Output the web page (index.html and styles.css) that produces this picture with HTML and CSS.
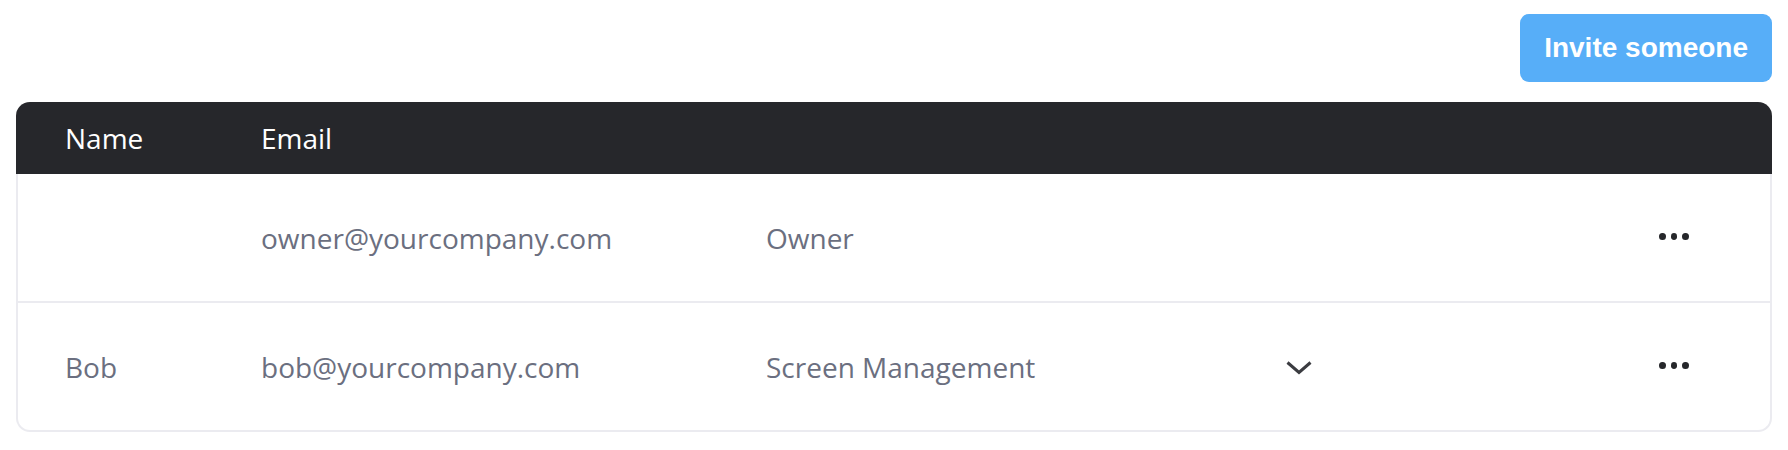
FILE: index.html
```html
<!DOCTYPE html>
<html lang="en">
<head>
  <meta charset="UTF-8" />
  <meta name="viewport" content="width=device-width, initial-scale=1.0" />
  <title>Team members</title>
  <link rel="stylesheet" href="styles.css">
</head>
<body>
  <div class="page">
    <div class="toolbar">
      <button class="invite">Invite someone</button>
    </div>

    <div class="members">
      <div class="head row">
        <div>Name</div>
        <div>Email</div>
        <div></div>
        <div></div>
        <div></div>
      </div>
      <div class="body">
        <div class="row">
          <div></div>
          <div>owner@yourcompany.com</div>
          <div>Owner</div>
          <div></div>
          <div class="more"><span class="dot"></span><span class="dot"></span><span class="dot"></span></div>
        </div>
        <div class="row">
          <div>Bob</div>
          <div>bob@yourcompany.com</div>
          <div>Screen Management</div>
          <div class="caret">
            <svg width="26" height="14" viewBox="0 0 26 14"><path d="M1.5 1.5 L13 11.5 L24.5 1.5" fill="none" stroke="#3b3c41" stroke-width="3"/></svg>
          </div>
          <div class="more"><span class="dot"></span><span class="dot"></span><span class="dot"></span></div>
        </div>
      </div>
    </div>
  </div>
</body>
</html>
```
FILE: styles.css
```css
body {
  margin:0;
  background:#fff;
  font-family:"Open Sans", "Noto Sans", sans-serif;
}
.page {
  padding:14px 16px 0 16px;
}
.toolbar {
  display:flex;
  justify-content:flex-end;
  margin-bottom:20px;
}
.invite {
  height:68px;
  padding:0 24px;
  border:none;
  border-radius:9px;
  background:#57aef8;
  color:#fff;
  font-family:"Liberation Sans", Arial, sans-serif;
  font-weight:bold;
  font-size:28px;
  cursor:pointer;
}
.row {
  display:grid;
  grid-template-columns:196px 505px 520px 1fr 30px;
  align-items:center;
  font-size:28px;
}
.head {
  height:72px;
  padding:0 83px 0 49px;
  background:#26272b;
  color:#fff;
  border-radius:14px 14px 0 0;
}
.body {
  border:2px solid #ebebf0;
  border-top:none;
  border-radius:0 0 14px 14px;
}
.body .row {
  height:127px;
  padding:0 81px 0 47px;
  color:#6b6f80;
}
.body .row + .row {
  border-top:2px solid #ebebf0;
}
.caret svg {
  display:block;
  margin-top:2px;
}
.more {
  display:flex;
  gap:5px;
  align-items:center;
  margin-top:-3px;
}
.dot {
  width:7px;
  height:7px;
  border-radius:50%;
  background:#26272b;
}
```
